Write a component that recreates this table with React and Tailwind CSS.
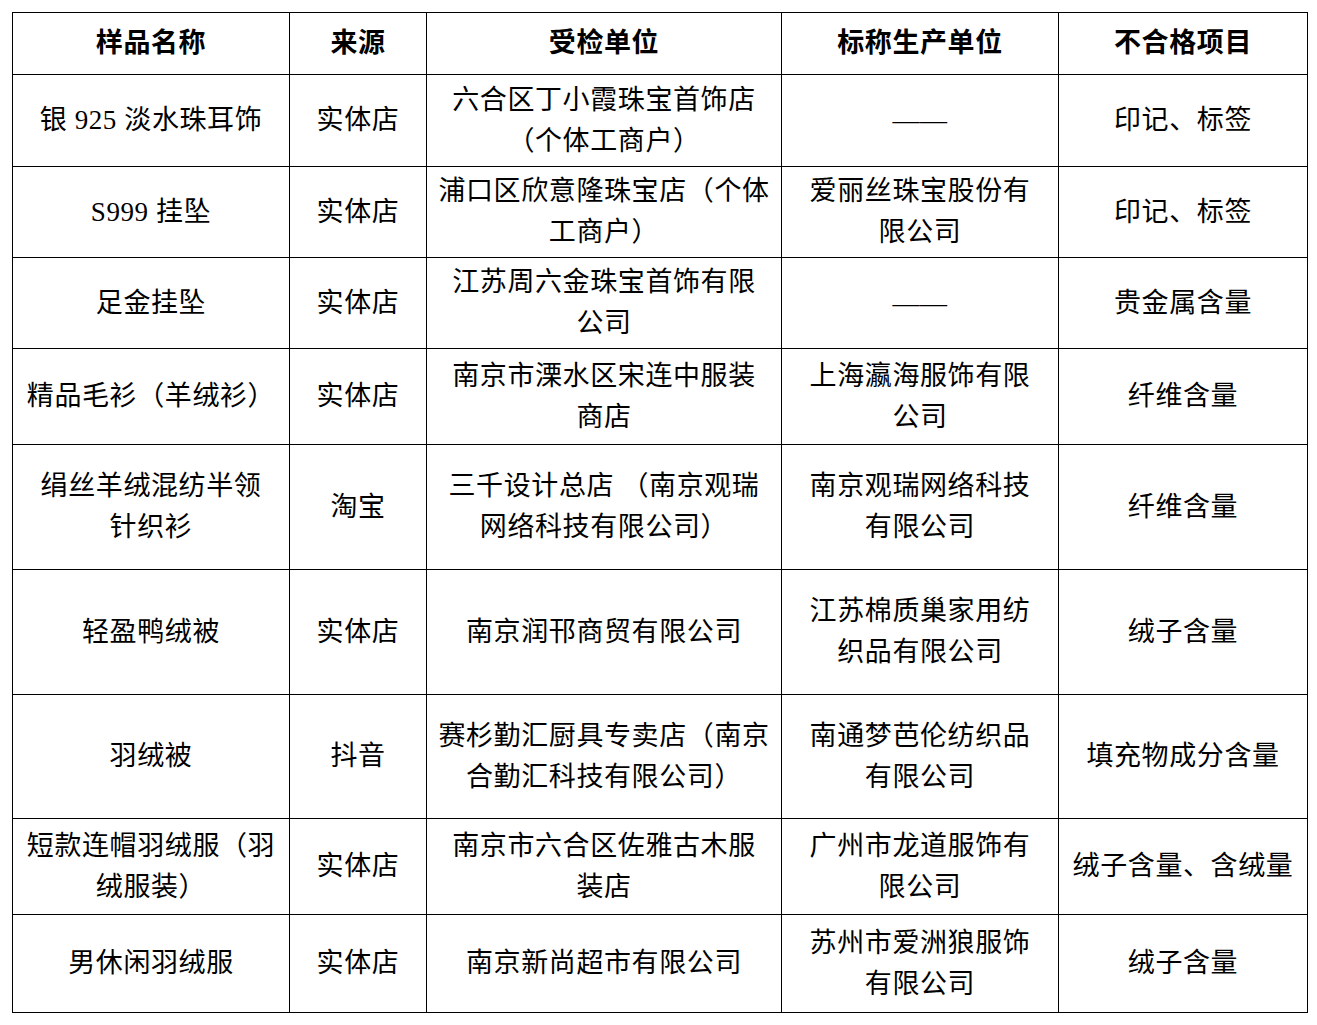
const header = ["样品名称", "来源", "受检单位", "标称生产单位", "不合格项目"];

const rows = [
  { h: "h-[92px]", cells: ["银 925 淡水珠耳饰", "实体店", "六合区丁小霞珠宝首饰店\n（个体工商户）", "——", "印记、标签"] },
  { h: "h-[91px]", cells: ["S999 挂坠", "实体店", "浦口区欣意隆珠宝店（个体\n工商户）", "爱丽丝珠宝股份有\n限公司", "印记、标签"] },
  { h: "h-[91px]", cells: ["足金挂坠", "实体店", "江苏周六金珠宝首饰有限\n公司", "——", "贵金属含量"] },
  { h: "h-[96px]", cells: ["精品毛衫（羊绒衫）", "实体店", "南京市溧水区宋连中服装\n商店", "上海瀛海服饰有限\n公司", "纤维含量"] },
  { h: "h-[125px]", cells: ["绢丝羊绒混纺半领\n针织衫", "淘宝", "三千设计总店 （南京观瑞\n网络科技有限公司）", "南京观瑞网络科技\n有限公司", "纤维含量"] },
  { h: "h-[125px]", cells: ["轻盈鸭绒被", "实体店", "南京润邗商贸有限公司", "江苏棉质巢家用纺\n织品有限公司", "绒子含量"] },
  { h: "h-[124px]", cells: ["羽绒被", "抖音", "赛杉勤汇厨具专卖店（南京\n合勤汇科技有限公司）", "南通梦芭伦纺织品\n有限公司", "填充物成分含量"] },
  { h: "h-[96px]", cells: ["短款连帽羽绒服（羽\n绒服装）", "实体店", "南京市六合区佐雅古木服\n装店", "广州市龙道服饰有\n限公司", "绒子含量、含绒量"] },
  { h: "h-[98px]", cells: ["男休闲羽绒服", "实体店", "南京新尚超市有限公司", "苏州市爱洲狼服饰\n有限公司", "绒子含量"] },
];

export default function App() {
  return (
    <div
      className="min-h-screen bg-white pt-3 pl-3 text-black"
      style={{ fontFamily: '"Liberation Serif", "Noto Sans CJK SC", serif' }}
    >
      <table className="table-fixed border-collapse w-[1295px] text-[27px] tracking-[0.6px] leading-[41px]">
        <colgroup>
          <col className="w-[277px]" />
          <col className="w-[137px]" />
          <col className="w-[355px]" />
          <col className="w-[277px]" />
          <col className="w-[249px]" />
        </colgroup>
        <thead>
          <tr className="h-[62px]">
            {header.map((t) => (
              <th key={t} className="border border-black text-center align-middle font-bold p-0">
                {t}
              </th>
            ))}
          </tr>
        </thead>
        <tbody>
          {rows.map((r, i) => (
            <tr key={i} className={r.h}>
              {r.cells.map((c, j) => (
                <td
                  key={j}
                  className="border border-black text-center align-middle font-normal p-0 whitespace-pre-line"
                >
                  {c}
                </td>
              ))}
            </tr>
          ))}
        </tbody>
      </table>
    </div>
  );
}
